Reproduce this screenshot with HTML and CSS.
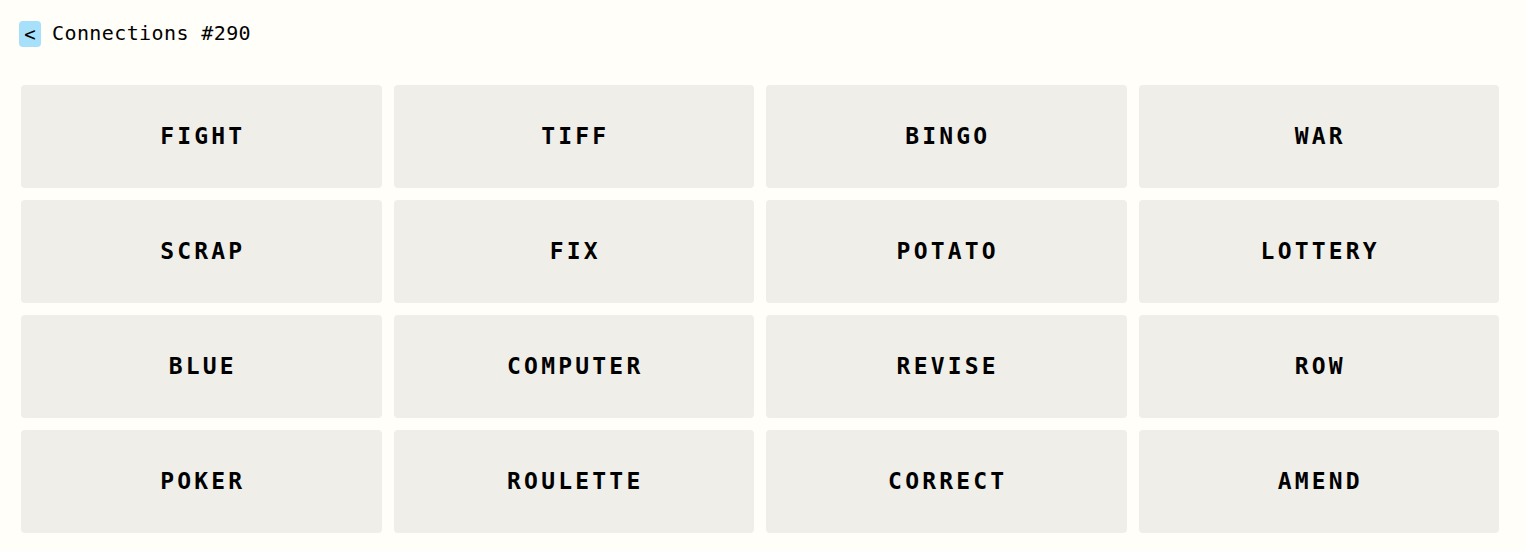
FILE: index.html
```html
<!doctype html>
<html lang="en">
<head>
  <meta charset="UTF-8">
  <meta name="viewport" content="width=device-width, initial-scale=1.0">
  <title>Connections #290</title>
  <link rel="stylesheet" href="styles.css">
</head>
<body>
  <div class="header">
    <button class="back">&lt;</button>
    <h1 class="title">Connections #290</h1>
  </div>

  <div class="board">
    <div class="tile">FIGHT</div>
    <div class="tile">TIFF</div>
    <div class="tile">BINGO</div>
    <div class="tile">WAR</div>
    <div class="tile">SCRAP</div>
    <div class="tile">FIX</div>
    <div class="tile">POTATO</div>
    <div class="tile">LOTTERY</div>
    <div class="tile">BLUE</div>
    <div class="tile">COMPUTER</div>
    <div class="tile">REVISE</div>
    <div class="tile">ROW</div>
    <div class="tile">POKER</div>
    <div class="tile">ROULETTE</div>
    <div class="tile">CORRECT</div>
    <div class="tile">AMEND</div>
  </div>
</body>
</html>
```

FILE: styles.css
```css
* {
  box-sizing: border-box;
}

body {
  margin: 0;
  font-family: 'DejaVu Sans Mono', 'Liberation Mono', monospace;
  background-color: #fffef8;
  color: #000;
}

.header {
  display: flex;
  align-items: center;
  gap: 11px;
  padding: 21px 0 0 19px;
}

.back {
  width: 22px;
  height: 26px;
  padding: 0;
  border: none;
  border-radius: 4px;
  background-color: #a6e0fa;
  font-family: inherit;
  font-size: 19px;
  color: #000;
  cursor: pointer;
}

.title {
  margin: 0 0 2px;
  font-size: 20px;
  font-weight: normal;
  letter-spacing: 0.4px;
}

.board {
  display: grid;
  grid-template-columns: repeat(4, 1fr);
  gap: 12px;
  width: 1478px;
  margin: 38px 0 0 21px;
}

.tile {
  height: 103px;
  display: flex;
  align-items: center;
  justify-content: center;
  padding: 0 0 2px 3px;
  border-radius: 4px;
  background-color: #efeee9;
  font-size: 23px;
  font-weight: bold;
  letter-spacing: 3.2px;
  cursor: pointer;
}
```
